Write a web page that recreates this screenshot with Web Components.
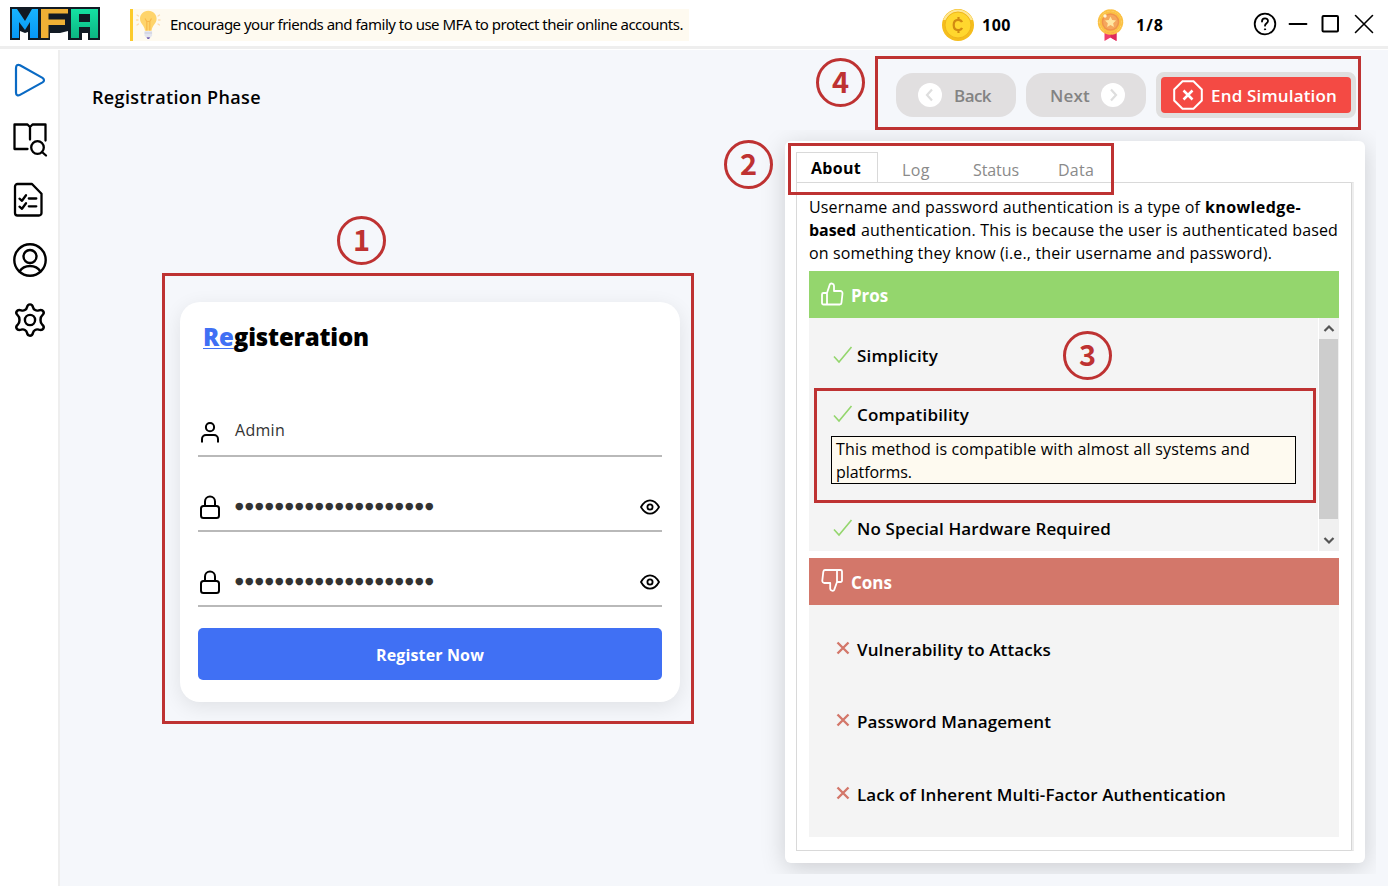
<!DOCTYPE html>
<html lang="en">
<head>
<meta charset="utf-8">
<title>MFA Simulation</title>
<style>
html,body{margin:0;height:100%}
body{font-family:"Open Sans","Noto Sans",sans-serif;font-size:16px;color:#000;background:#fff;overflow:hidden}
</style>
</head>
<body>
<mfa-app></mfa-app>
<script>
const make = (name, css, html) => [name, class extends HTMLElement {
  constructor() {
    super();
    this.attachShadow({mode: 'open'}).innerHTML = `<style>*{box-sizing:border-box}${css}</style>` +
      (typeof html === 'function' ? html(this) : html);
  }
}];

const ICONS = {
  play: '<path d="M3 5.2v24.2c0 2.600 1.700 3.800 4 2.500L29.500 19.400c2-1.200 2-3.200 0-4.500L7 2.200C4.700 1 3 2.500 3 5.200z" stroke="#0a6ac4" stroke-width="2.200"/>',
  book: '<path d="M32.500 17.500V1.500H19.500L17 4 14.500 1.500H1.500V26h13M17 4v12.500" stroke-width="2.300"/><circle cx="24.500" cy="24.500" r="6.300" stroke-width="2.300"/><path d="M29 29l4 3.500" stroke-width="2.300"/>',
  list: '<path d="M4.500 1H19l9.500 9.700V30a2.500 2.500 0 0 1-2.500 2.500H4.500A2.500 2.500 0 0 1 2 30V3.500A2.500 2.500 0 0 1 4.500 1z" stroke-width="2.300"/><path d="M6.500 15.700l2.500 2.100 4-5.500M6.500 23.700l2.500 2.100 4-5.500M15.800 15.500h7.500M15.800 23.300h7.500" stroke-width="2.300"/>',
  person: '<circle cx="17" cy="17" r="15.700" stroke-width="2.400"/><circle cx="17" cy="13.500" r="6.500" stroke-width="2.400"/><path d="M6.500 28.500c2.500-4 6-5.500 10.500-5.500s8 1.500 10.500 5.500" stroke-width="2.400"/>',
  gear: '<circle cx="17" cy="17" r="5.100" stroke-width="2.400"/><g transform="translate(17 17) scale(1.080 1) translate(-17 -17)"><path d="M14.200 4.200C15 .3 19 .3 19.800 4.200c.5 2.700 2.900 4 5.400 3.100 4-1.300 6 2.300 3.100 5-2.100 1.700-2.100 7.700 0 9.400 2.900 2.700.9 6.300-3.100 5-2.500-.9-4.900.4-5.400 3.100-.8 3.900-4.800 3.900-5.600 0-.5-2.700-2.900-4-5.400-3.100-4 1.300-6-2.300-3.100-5 2.100-1.700 2.100-7.700 0-9.400-2.900-2.700-.9-6.300 3.100-5 2.500.9 4.900-.4 5.400-3.100z" stroke-width="2.300"/></g>'
};

const defs = [
  /* Stroke icons of the side bar */
  make('nav-icon', ':host{display:block;width:34px;height:34px}svg{display:block;overflow:visible}',
    el => `<svg width="34" height="34" fill="none" stroke="#000" stroke-linecap="round" stroke-linejoin="round">${ICONS[el.getAttribute('name')]}</svg>`),

  make('side-bar', ':host{display:flex;flex-direction:column;gap:26px;padding:13px 0 0 13px;width:60px;border-right:2px solid #eeeeee;background:#fff}',
    Object.keys(ICONS).map(n => `<nav-icon name="${n}"></nav-icon>`).join('')),

  make('app-logo', ':host{display:block;width:90px;height:34px}svg{display:block}', `
    <svg width="90" height="34"><defs><linearGradient id="b" x2="0" y2="1"><stop stop-color="#18b4ff"/><stop offset="1" stop-color="#0797f5"/></linearGradient><linearGradient id="g" x2="0" y2="1"><stop stop-color="#14e2a2"/><stop offset="1" stop-color="#0cb584"/></linearGradient></defs>
    <path d="M0 0h90v33H78v-7h-6v7H58V24l-8 2H40v7H18v-8l-3 1-5-2v9H0z" fill="#111a24"/>
    <path d="M2 2h5l8 12 7-12h6v29h-8V15l-5 8-6-8v16H2z" fill="url(#b)"/>
    <path d="M31 2h27v4.500H38.500v6H55V18H38.500v13H31z" fill="#efb035"/>
    <path d="M61 2h27v29h-8V20H69v11h-8zm8 5v8h11V7z" fill="url(#g)" fill-rule="evenodd"/></svg>`),

  make('tip-banner', ':host{display:flex;align-items:center;width:559px;height:32px;border-left:3px solid #fccb2c;background:#fefaf0;font:15px "Noto Sans","Open Sans",sans-serif}svg{display:block;margin:0 8px 0 2px;flex:none}fit-text{margin-top:-2px}', `
    <svg width="27" height="32"><g stroke="#fddcae" stroke-width="1.300" stroke-linecap="round"><path d="M2 6l1.500 1M1.500 11H3M2 16l1.500-1M24.500 6L23 7M25 11h-1.500M24.500 16L23 15"/></g><path d="M13.300 1.800c-5.200 0-8.300 4-8.300 8 0 5 4.500 6.500 5 12h6.600c.5-5.500 5-7 5-12 0-4-3.100-8-8.300-8z" fill="#fed46b"/><path d="M10 9.500l1.800 3h3l1.700-3M11.800 12.500v9M14.800 12.500v9" stroke="#f8b84a" fill="none" stroke-width="1.200"/><path d="M9.500 22h7.600v4.500l-1.500 2H11l-1.500-2z" fill="#e3e5ee"/><path d="M9.500 24h7.600" stroke="#c9cbdb"/><path d="M11.500 28.300h3.600l-1 1.700h-1.600z" fill="#735fb0"/></svg>
    <fit-text w="513"><slot></slot></fit-text>`),

  make('score-item', ':host{display:flex;align-items:center;gap:8px;font-weight:700;font-size:16px}:host([kind=medal]){gap:12px}svg{display:block}', el => (el.getAttribute('kind') === 'coin' ? `
    <svg width="32" height="32"><circle cx="16" cy="16" r="16" fill="#f5bd1c"/><path d="M1 11A16 16 0 0 1 31 11z" fill="#fee795"/><circle cx="16" cy="16" r="13" fill="#ffd72e" stroke="#efb51b"/><path d="M20 13.200c-.6-1.500-1.900-2.300-3.800-2.300-2.900 0-4.500 2-4.500 5.100s1.600 5.100 4.500 5.100c1.900 0 3.200-.8 3.800-2.300M16.500 8v3M16.500 21v3" fill="none" stroke="#d18a12" stroke-width="2.200"/></svg>` : `
    <svg width="27" height="32"><path d="M7.500 22v10l6-3.500 6 3.500V22z" fill="#ef3e6b"/><path d="M13.500 24v4.500l6 3.500v-8z" fill="#dd2a5b"/><circle cx="13.500" cy="13" r="11" fill="#fbc144"/><circle cx="13.500" cy="13" r="11.800" fill="none" stroke="#fbc144" stroke-width="2" stroke-dasharray="4.500 1.680" stroke-linecap="round"/><circle cx="13.500" cy="13" r="8.800" fill="#f0934b"/><circle cx="13.500" cy="13" r="7.300" fill="#f5a75d"/><path d="M13.500 7.600l1.700 3.500 3.800.5-2.800 2.600.7 3.800-3.400-1.900-3.400 1.900.7-3.800L8 11.600l3.800-.5z" fill="#ffe7a3"/><circle cx="8" cy="7" r="1.700" fill="#fff4d8"/></svg>`) + `<fit-text w="${el.getAttribute('w')}"><slot></slot></fit-text>`),

  make('window-controls', ':host{display:block}svg{display:block}', `
    <svg width="122" height="24" fill="none" stroke="#000" stroke-width="1.800" stroke-linecap="round"><circle cx="12" cy="12" r="10.300"/><path d="M9 9.500c0-4 6-4 6-.5 0 2.200-3 2.200-3 4.700"/><circle cx="12" cy="17.300" r=".6" fill="#000" stroke-width="1"/><path d="M36.500 12h17"/><rect x="69.500" y="4" width="15.500" height="15.500" rx="1" stroke-width="2"/><path d="M102.500 3.500l17 17M119.500 3.500l-17 17" stroke-width="1.600"/></svg>`),

  make('top-bar', `:host{display:flex;height:49px;border-bottom:3px solid #eeeeee;background:#fff;padding:1px 14px 0 10px;align-items:center}
    tip-banner{margin:2px 0 0 30px}.coin{margin:2px 0 0 253px}.medal{margin:2px 0 0 86px}window-controls{margin:1px -1px 0 auto}`, `
    <app-logo></app-logo>
    <tip-banner>Encourage your friends and family to use MFA to protect their online accounts.</tip-banner>
    <score-item class="coin" kind="coin" w="29">100</score-item>
    <score-item class="medal" kind="medal" w="28">1/8</score-item>
    <window-controls></window-controls>`),

  make('step-button', ':host{display:flex;align-items:center;padding-left:22px;gap:12px;width:120px;height:44px;border-radius:17px;background:#e1dfe0;color:#838383;font-weight:600;font-size:17px}:host([dir=next]){flex-direction:row-reverse;gap:11px;padding:0 21px 0 0}svg{display:block}fit-text{margin-top:1px}', el => `
    <svg width="24" height="24"><circle cx="12" cy="12" r="12" fill="#fff"/><path d="${el.getAttribute('dir') === 'next' ? 'M10 6.500l5 5.500-5 5.500' : 'M14 6.500L9 12l5 5.500'}" fill="none" stroke="#dedede" stroke-width="2.200"/></svg><fit-text w="${el.getAttribute('w')}"><slot></slot></fit-text>`),

  make('end-button', ':host{display:block;width:200px;height:46px;border:5px solid #e0dfdf;border-radius:8px;background:#e0dfdf;color:#fff;font-weight:600;font-size:17px}div{display:flex;align-items:center;gap:8px;width:190px;height:36px;background:#f44a44;border-radius:4px;padding-left:12px}svg{display:block}fit-text{margin-top:1px}', `
    <div><svg width="30" height="30" fill="none" stroke="#fff" stroke-width="2"><path d="M9.500 1.200h11l8.300 8.300v11l-8.300 8.300h-11l-8.300-8.300v-11z"/><path d="M10.500 10.500l9 9M19.500 10.500l-9 9" stroke-width="2.500"/></svg><fit-text w="126"><slot></slot></fit-text></div>`),

  make('form-field', `:host{display:flex;align-items:center;height:47px;border-bottom:2px solid #b9b9b9;padding:0 2px 2px;color:#333}
    svg{display:block;flex:none}.v{margin:0 0 4px 15px;flex:1;line-height:20px}.dots{font:9.800px/20px "DejaVu Sans",sans-serif;margin-bottom:2px}`, el => {
    const pw = el.getAttribute('kind') === 'password';
    return (pw ? `<svg width="20" height="24" fill="none" stroke="#000" stroke-width="2"><rect x="1" y="11" width="18" height="12" rx="2.500"/><path d="M5 11V6.500a5 5 0 0 1 10 0V11"/></svg>`
      : `<svg width="20" height="24" fill="none" stroke="#000" stroke-width="2"><circle cx="10" cy="7.200" r="4.100"/><path d="M2 22.500V19a4 4 0 0 1 4-4h8a4 4 0 0 1 4 4v3.500"/></svg>`) +
      `<div class="v ${pw ? 'dots' : ''}"><fit-text w="${pw ? 200 : 50}"><slot></slot></fit-text></div>` +
      (pw ? `<svg width="20" height="16" fill="none" stroke="#000" stroke-width="1.800"><path d="M1 8c2.500-4.500 5.500-6.700 9-6.700S16.500 3.500 19 8c-2.500 4.500-5.500 6.700-9 6.700S3.500 12.500 1 8z"/><circle cx="10" cy="8" r="2.600"/></svg>` : '');
  }),

  make('register-card', `:host{display:flex;flex-direction:column;width:500px;height:400px;border-radius:20px;background:#fff;padding:18px;box-shadow:0 5px 20px rgba(0,0,0,.09)}
    h2{margin:0 0 56px 5px;font-weight:800;font-size:24px;line-height:34px}h2 span{color:#4070f4;text-decoration:underline;text-decoration-thickness:1px;text-underline-offset:2px}
    form-field+form-field{margin-top:28px}
    button{margin-top:21px;height:52px;border:0;border-radius:5px;background:#4070f4;color:#fff;font:700 16px "Open Sans",sans-serif;padding:2px 0 0}`, `
    <h2><fit-text w="166"><span>Re</span>gisteration</fit-text></h2>
    <form-field>Admin</form-field>
    <form-field kind="password">●●●●●●●●●●●●●●●●●●●●</form-field>
    <form-field kind="password">●●●●●●●●●●●●●●●●●●●●</form-field>
    <button><fit-text w="108">Register Now</fit-text></button>`),

  make('tab-strip', `:host{display:flex;height:31px;font-size:16px;color:#8a8a8a}
    .on{width:82px;height:31px;border:1px solid #d9d9d9;border-bottom:0;background:#fff;color:#000;font-weight:700;padding-left:14px;line-height:30px}
    .t{line-height:36px;height:31px}.a{margin-left:24px}.b{margin-left:43px}.c{margin-left:39px}`, `
    <div class="on"><fit-text w="50">About</fit-text></div><div class="t a"><fit-text w="28">Log</fit-text></div>
    <div class="t b"><fit-text w="46">Status</fit-text></div><div class="t c"><fit-text w="36">Data</fit-text></div>`),

  make('list-head', ':host{display:flex;align-items:center;gap:7px;height:47px;padding:2px 0 0 12px;background:#94d66d;color:#fff;font-weight:700;font-size:17px}:host([kind=cons]){background:#d3776a}svg{display:block;margin-top:-3px}:host([kind=cons]) svg{margin-top:-5px}', el => `
    <svg width="23" height="24" fill="none" stroke="#fff" stroke-width="1.800" stroke-linejoin="round">${el.getAttribute('kind') === 'cons'
      ? '<path d="M4 2h15.500A1.500 1.500 0 0 1 21 3.500v9a1.500 1.500 0 0 1-1.500 1.500H16l-2.800 7.900c-.6 1.500-4 1-4-1.200V15H3.500A2.200 2.200 0 0 1 1.300 12.500l1-8.700A2 2 0 0 1 4 2zM16 2v12"/>'
      : '<path d="M19 22.500H2.500A1.500 1.500 0 0 1 1 21v-8.500A1.500 1.500 0 0 1 2.500 11H6l2.800-8.500C9.400.8 13 1.300 13 3.800V9h6.300a2.200 2.200 0 0 1 2.200 2.500l-1 9a2 2 0 0 1-1.500 2zM6 11v11.500"/>'}</svg><fit-text w="${el.getAttribute('w')}"><slot></slot></fit-text>`),

  make('fact-item', ':host{display:flex;align-items:center;height:24px;padding-left:24px;gap:4px;font-weight:600;font-size:17px;line-height:24px}svg{display:block;width:20px;flex:none}', el => `
    ${el.getAttribute('kind') === 'con' ? '<svg height="20" fill="none" stroke="#d3776a" stroke-width="2.400" style="margin-top:-4px"><path d="M4.500 4.500l11 11M15.500 4.500l-11 11"/></svg>'
      : '<svg height="20" fill="none" stroke="#94d66d" stroke-width="1.600" style="margin-top:-3px"><path d="M1 11.500l5 5.500L18.500 2"/></svg>'}<fit-text w="${el.getAttribute('w')}"><slot></slot></fit-text>`),

  make('scroll-bar', ':host{display:flex;flex-direction:column;align-items:center;width:21px;border-left:1px solid #fff;background:#f0f0f0;padding-right:1px}i{width:19px;height:180px;background:#cdcdcd}svg{display:block;margin:6px 0}svg:last-child{margin-top:auto}', `
    <svg width="12" height="9" fill="none" stroke="#555" stroke-width="2.200"><path d="M1.500 7L6 2.500 10.500 7"/></svg><i></i><svg width="12" height="9" fill="none" stroke="#555" stroke-width="2.200"><path d="M1.500 2L6 6.500 10.500 2"/></svg>`),

  make('info-panel', `:host{display:flex;flex-direction:column;width:580px;height:722px;border-radius:6px;background:#fff;padding:11px;box-shadow:0 5px 24px rgba(0,0,0,.17);clip-path:inset(-11px -11px -11px -40px)}
    tab-strip{margin-bottom:-1px;position:relative}
    .page{height:669px;width:558px;border:1px solid #d9d9d9;padding:13px 12px 0;position:relative;border-right:3px solid #eeeeee}
    .page::after{content:"";position:absolute;right:-1px;top:0;bottom:0;width:1px;background:#d5d5d5}
    .intro{line-height:23px;margin-bottom:6px}.line{display:flex;gap:5px}
    .pros{display:flex;height:233px;background:#f4f4f4;margin-bottom:7px}.list{flex:1;padding-top:26px;min-width:0}
    .note{margin:9px 0 33px 22px;width:465px;height:48px;border:1px solid #000;background:#fefaf0;padding:1px 4px;line-height:23px}
    .sp{margin-top:35px}.cons{height:232px;background:#f4f4f4;padding-top:33px}.cons .n{margin-top:48px}.cons .m{margin-top:49px}
    list-head,.pros,.cons{width:530px}b{font-weight:700}`, `
    <tab-strip></tab-strip>
    <div class="page">
      <div class="intro">
        <div class="line"><fit-text w="391">Username and password authentication is a type of</fit-text><b><fit-text w="96">knowledge-</fit-text></b></div>
        <div class="line"><b><fit-text w="47">based</fit-text></b><fit-text w="477">authentication. This is because the user is authenticated based</fit-text></div>
        <div class="line"><fit-text w="463">on something they know (i.e., their username and password).</fit-text></div>
      </div>
      <list-head w="37">Pros</list-head>
      <div class="pros"><div class="list">
        <fact-item w="81">Simplicity</fact-item>
        <fact-item class="sp" w="112">Compatibility</fact-item>
        <div class="note"><fit-text w="414">This method is compatible with almost all systems and</fit-text><br><fit-text w="76">platforms.</fit-text></div>
        <fact-item w="254">No Special Hardware Required</fact-item>
      </div><scroll-bar></scroll-bar></div>
      <list-head kind="cons" w="41">Cons</list-head>
      <div class="cons">
        <fact-item kind="con" w="194">Vulnerability to Attacks</fact-item>
        <fact-item kind="con" class="n" w="194">Password Management</fact-item>
        <fact-item kind="con" class="m" w="369">Lack of Inherent Multi-Factor Authentication</fact-item>
      </div>
    </div>`),

  /* Numbered call-outs laid over the page */
  make('call-out', ':host{position:absolute;border:3px solid #be3232;pointer-events:none}:host([round]){display:flex;align-items:center;justify-content:center;width:49px;height:49px;padding-bottom:4px;border-radius:50%;color:#be3232;font:700 29px/1 "Noto Sans CJK SC","Noto Sans",sans-serif}', '<slot></slot>'),

  make('mfa-app', `:host{display:flex;flex-direction:column;width:1388px;height:887px;position:relative;background:#fff}
    .body{display:flex;height:836px;margin-top:1px}
    main{flex:1;background:#f5f7fb;display:flex;justify-content:space-between}
    .left{padding:34px 0 0 32px}.left h1{margin:0 0 192px;font-size:18px;font-weight:600;line-height:26px}
    register-card{margin-left:88px}
    .right{padding:22px 23px 0 0;display:flex;flex-direction:column;align-items:flex-end}
    .buttons{display:flex;align-items:center;gap:10px;margin:0 9px 23px 0}`, `
    <top-bar></top-bar>
    <div class="body"><side-bar></side-bar>
      <main>
        <div class="left"><h1><fit-text w="169">Registration Phase</fit-text></h1><register-card></register-card></div>
        <div class="right"><div class="buttons"><step-button w="37">Back</step-button><step-button dir="next" w="40">Next</step-button><end-button>End Simulation</end-button></div><info-panel></info-panel></div>
      </main></div>
    <call-out style="left:162px;top:273px;width:532px;height:451px"></call-out><call-out round style="left:337px;top:216px">1</call-out>
    <call-out style="left:788px;top:143px;width:326px;height:52px"></call-out><call-out round style="left:724px;top:140px">2</call-out>
    <call-out style="left:814px;top:388px;width:502px;height:115px"></call-out><call-out round style="left:1063px;top:331px">3</call-out>
    <call-out style="left:875px;top:56px;width:486px;height:74px"></call-out><call-out round style="left:816px;top:58px">4</call-out>`)
];
defs.reverse().forEach(([n, c]) => customElements.define(n, c));

/* Tracks a run of text so that it fills the width given in "w" */
customElements.define('fit-text', class extends HTMLElement {
  connectedCallback() {
    const root = this.attachShadow({mode: 'open'});
    root.innerHTML = '<style>:host{display:inline-block;white-space:nowrap;text-align:left}</style><span><slot></slot></span>';
    const span = root.querySelector('span'), w = +this.getAttribute('w');
    this.style.width = w + 'px';
    const slot = root.querySelector('slot');
    const n = [...slot.assignedNodes({flatten: true}).map(x => x.textContent).join('').trim()].length;
    const gap = (w - span.getBoundingClientRect().width) / n;
    span.style.letterSpacing = gap.toFixed(3) + 'px';
  }
});
</script>
</body>
</html>
